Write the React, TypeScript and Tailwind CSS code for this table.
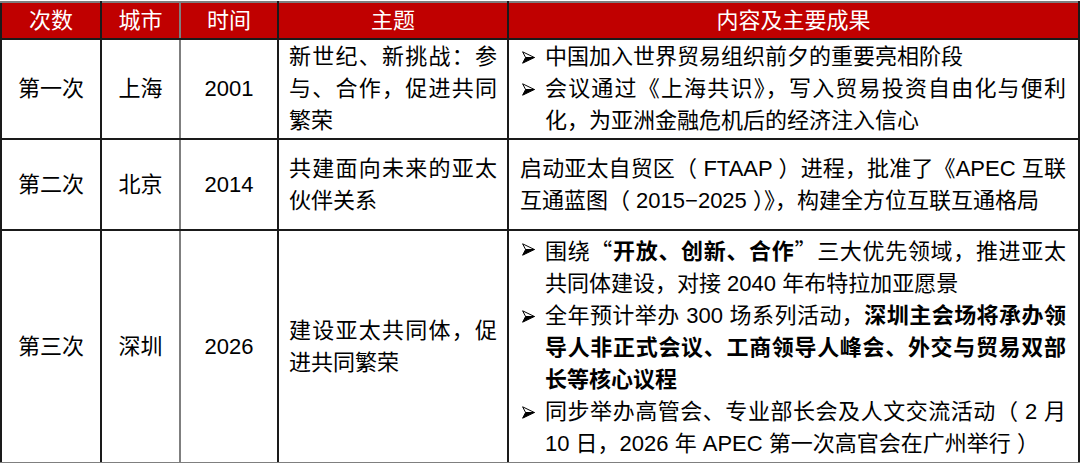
import React from 'react';

const Arrow = () => (
  <svg width="13" height="13" viewBox="0 0 13 13" aria-hidden="true">
    <path d="M0.6 0.8 L12.4 6.5 L3.6 6.5 Z" fill="#fff" stroke="#000" strokeWidth="1" strokeLinejoin="round" />
    <path d="M3.6 6.5 L12.4 6.5 L0.6 12.2 Z" fill="#000" stroke="#000" strokeWidth="1" strokeLinejoin="round" />
  </svg>
);

const Item = ({ children }: { children: React.ReactNode }) => (
  <div className="flex">
    <span className="w-[25px] shrink-0 h-[32px] flex items-center pl-[2px]">
      <Arrow />
    </span>
    <div className="flex-1 text-justify">{children}</div>
  </div>
);

const Q = ({ children }: { children: React.ReactNode }) => (
  <span className="font-['Noto_Sans_CJK_SC',sans-serif]">{children}</span>
);

const rows = [
  {
    no: '第一次',
    city: '上海',
    year: '2001',
    topic: '新世纪、新挑战：参与、合作，促进共同繁荣',
    h: 'h-[100px]',
    gray: false,
  },
  {
    no: '第二次',
    city: '北京',
    year: '2014',
    topic: '共建面向未来的亚太伙伴关系',
    h: 'h-[91px]',
    gray: false,
  },
  {
    no: '第三次',
    city: '深圳',
    year: '2026',
    topic: '建设亚太共同体，促进共同繁荣',
    h: 'h-[232px]',
    gray: true,
  },
];

const App = () => {
  const cell = 'border-2 border-[#1a1a1a] align-middle';
  const content = [
    <div className="pl-[11px] pr-[12px] py-[1px]">
      <Item>中国加入世界贸易组织前夕的重要亮相阶段</Item>
      <Item>会议通过《上海共识》，写入贸易投资自由化与便利化，为亚洲金融危机后的经济注入信心</Item>
    </div>,
    <div className="pl-[11px] pr-[12px] text-justify">
      启动亚太自贸区（ FTAAP ）进程，批准了《APEC 互联互通蓝图（ 2015−2025 ）》，构建全方位互联互通格局
    </div>,
    <div className="pl-[11px] pr-[12px] py-[2px]">
      <Item>
        围绕<Q>“</Q><b>开放、创新、合作</b><Q>”</Q>三大优先领域，推进亚太共同体建设，对接 2040 年布特拉加亚愿景
      </Item>
      <Item>
        全年预计举办 300 场系列活动，<b>深圳主会场将承办领导人非正式会议、工商领导人峰会、外交与贸易双部长等核心议程</b>
      </Item>
      <Item>同步举办高管会、专业部长会及人文交流活动（ 2 月 10 日，2026 年 APEC 第一次高官会在广州举行 ）</Item>
    </div>,
  ];

  return (
    <div className="w-[1080px] h-[463px] bg-white pt-[1px] font-['Liberation_Sans','Noto_Sans_CJK_SC',sans-serif] text-[22px] leading-[32px] text-black">
      <table className="table-fixed border-collapse w-[1078px]">
        <colgroup>
          <col className="w-[100px]" />
          <col className="w-[79px]" />
          <col className="w-[98px]" />
          <col className="w-[230px]" />
          <col className="w-[571px]" />
        </colgroup>
        <thead>
          <tr className="h-[37px] bg-[#c00000] text-white">
            <th className={`${cell} border-t-[#7f7f7f] font-normal`}>次数</th>
            <th className={`${cell} border-t-[#7f7f7f] border-r-[#7f7f7f] font-normal`}>城市</th>
            <th className={`${cell} border-t-[#7f7f7f] font-normal`}>时间</th>
            <th className={`${cell} border-t-[#7f7f7f] font-normal`}>主题</th>
            <th className={`${cell} border-t-[#7f7f7f] font-normal`}>内容及主要成果</th>
          </tr>
        </thead>
        <tbody>
          {rows.map((r, i) => {
            const b = r.gray ? 'border-b-[#7f7f7f]' : '';
            return (
              <tr key={r.no} className={r.h}>
                <td className={`${cell} ${b} text-center`}>{r.no}</td>
                <td className={`${cell} ${b} border-r-[#7f7f7f] text-center`}>{r.city}</td>
                <td className={`${cell} ${b} text-center`}>{r.year}</td>
                <td className={`${cell} ${b} pl-[10px] pr-[10px] text-justify`}>{r.topic}</td>
                <td className={`${cell} ${b} p-0`}>{content[i]}</td>
              </tr>
            );
          })}
        </tbody>
      </table>
    </div>
  );
};

export default App;
